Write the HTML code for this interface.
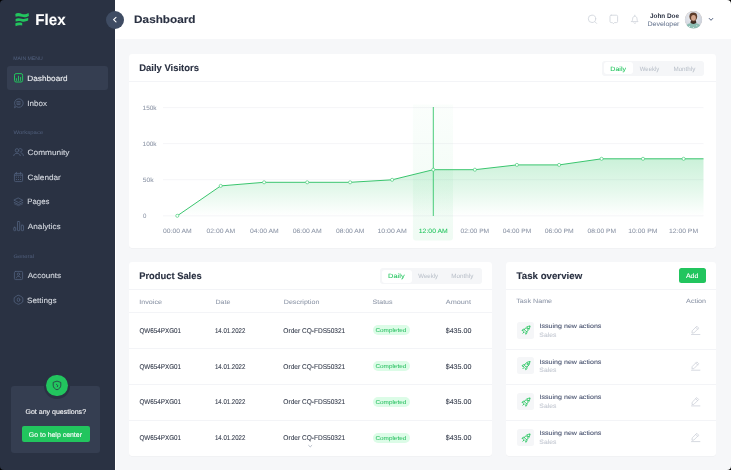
<!DOCTYPE html>
<html><head><meta charset="utf-8"><style>
html,body{margin:0;padding:0;background:#000;}
body{width:731px;height:470px;overflow:hidden;position:relative;}
#root{position:absolute;left:0;top:0;width:731px;height:470px;border-radius:4px;overflow:hidden;will-change:transform;}
.t{position:absolute;white-space:nowrap;transform-origin:0 0;font-family:"Liberation Sans",sans-serif;text-rendering:geometricPrecision;}
</style></head><body><div id="root">
<div style="position:absolute;left:0px;top:0px;width:115.00px;height:470.00px;background:#2a3243;border-radius:0px;"></div>
<div style="position:absolute;left:115px;top:0px;width:616.00px;height:39.00px;background:#ffffff;border-radius:0px;"></div>
<div style="position:absolute;left:115px;top:39px;width:1.00px;height:431.00px;background:#ffffff;border-radius:0px;"></div>
<div style="position:absolute;left:116px;top:39px;width:615.00px;height:431.00px;background:#f6f7f9;border-radius:0px;"></div>
<div style="position:absolute;left:7px;top:66px;width:101.00px;height:24.00px;background:#353e51;border-radius:3px;"></div>
<div style="position:absolute;left:11px;top:386px;width:89.00px;height:67.00px;background:#353e51;border-radius:3px;"></div>
<div style="position:absolute;left:43.6px;top:372.3px;width:26.6px;height:26.6px;border-radius:50%;background:#2a3243"></div>
<div style="position:absolute;left:46.2px;top:374.7px;width:21.4px;height:21.4px;border-radius:50%;background:#22c55e"></div>
<div style="position:absolute;left:21.8px;top:425.9px;width:68.00px;height:16.00px;background:#22c55e;border-radius:2px;"></div>
<div style="position:absolute;left:106px;top:10.6px;width:18px;height:18px;border-radius:50%;background:#3f4c63"></div>
<div style="position:absolute;left:684.8px;top:10.8px;width:17.6px;height:17.6px;border-radius:50%;background:#b9a89a"></div>
<div style="position:absolute;left:129px;top:53.5px;width:587.40px;height:194.20px;background:#ffffff;border-radius:3px;box-shadow:0 0.5px 0.5px rgba(30,40,60,0.05)"></div>
<div style="position:absolute;left:129px;top:81px;width:587.40px;height:1.00px;background:#f3f4f7;border-radius:0px;"></div>
<svg style="position:absolute;left:0;top:0" width="731" height="470" viewBox="0 0 731 470">
<defs>
<linearGradient id="gf" x1="0" y1="158" x2="0" y2="216" gradientUnits="userSpaceOnUse"><stop offset="0" stop-color="#22c55e" stop-opacity="0.24"/><stop offset="0.55" stop-color="#22c55e" stop-opacity="0.12"/><stop offset="1" stop-color="#22c55e" stop-opacity="0.0"/></linearGradient>
<linearGradient id="gb" x1="0" y1="104" x2="0" y2="240" gradientUnits="userSpaceOnUse"><stop offset="0" stop-color="#22c55e" stop-opacity="0.02"/><stop offset="1" stop-color="#22c55e" stop-opacity="0.07"/></linearGradient>
</defs>
<g stroke="#f1f2f5" stroke-width="0.8">
<line x1="163" y1="107.6" x2="703.5" y2="107.6"/><line x1="163" y1="143.6" x2="703.5" y2="143.6"/><line x1="163" y1="179.7" x2="703.5" y2="179.7"/><line x1="163" y1="215.8" x2="703.5" y2="215.8"/>
</g>
<path d="M412.9,104.5 H453 V237.4 Q453,240.4 450,240.4 H415.9 Q412.9,240.4 412.9,237.4 Z" fill="url(#gb)"/>
<path d="M177.3,215.8 L220.7,185.9 L264.1,182.3 L307.2,182.3 L350.1,182.3 L392.1,179.8 L433.3,169.7 L474.9,169.7 L516.9,164.9 L559.1,164.9 L601.6,158.8 L643,158.8 L683.6,158.8 L703.5,158.8 L703.5,215.8 L177.3,215.8 Z" fill="url(#gf)"/>
<line x1="433.3" y1="107" x2="433.3" y2="216" stroke="#35c66c" stroke-width="0.9"/>
<polyline points="177.3,215.8 220.7,185.9 264.1,182.3 307.2,182.3 350.1,182.3 392.1,179.8 433.3,169.7 474.9,169.7 516.9,164.9 559.1,164.9 601.6,158.8 643,158.8 683.6,158.8 703.5,158.8" fill="none" stroke="#3ac56e" stroke-width="1" stroke-linejoin="round"/>
<circle cx="177.3" cy="215.8" r="1.55" fill="#fff" stroke="#3ecb72" stroke-width="0.65"/><circle cx="220.7" cy="185.9" r="1.55" fill="#fff" stroke="#3ecb72" stroke-width="0.65"/><circle cx="264.1" cy="182.3" r="1.55" fill="#fff" stroke="#3ecb72" stroke-width="0.65"/><circle cx="307.2" cy="182.3" r="1.55" fill="#fff" stroke="#3ecb72" stroke-width="0.65"/><circle cx="350.1" cy="182.3" r="1.55" fill="#fff" stroke="#3ecb72" stroke-width="0.65"/><circle cx="392.1" cy="179.8" r="1.55" fill="#fff" stroke="#3ecb72" stroke-width="0.65"/><circle cx="433.3" cy="169.7" r="1.55" fill="#fff" stroke="#3ecb72" stroke-width="0.65"/><circle cx="474.9" cy="169.7" r="1.55" fill="#fff" stroke="#3ecb72" stroke-width="0.65"/><circle cx="516.9" cy="164.9" r="1.55" fill="#fff" stroke="#3ecb72" stroke-width="0.65"/><circle cx="559.1" cy="164.9" r="1.55" fill="#fff" stroke="#3ecb72" stroke-width="0.65"/><circle cx="601.6" cy="158.8" r="1.55" fill="#fff" stroke="#3ecb72" stroke-width="0.65"/><circle cx="643" cy="158.8" r="1.55" fill="#fff" stroke="#3ecb72" stroke-width="0.65"/><circle cx="683.6" cy="158.8" r="1.55" fill="#fff" stroke="#3ecb72" stroke-width="0.65"/>
</svg>
<div style="position:absolute;left:602px;top:61px;width:101.80px;height:14.50px;background:#f5f6f8;border-radius:3px;"></div>
<div style="position:absolute;left:603.8px;top:62.3px;width:29.00px;height:12.10px;background:#ffffff;border-radius:3px;"></div>
<div style="position:absolute;left:129.2px;top:261.9px;width:362.80px;height:194.10px;background:#ffffff;border-radius:3px;box-shadow:0 0.5px 0.5px rgba(30,40,60,0.05)"></div>
<div style="position:absolute;left:129.2px;top:289px;width:362.60px;height:1.00px;background:#f3f4f7;border-radius:0px;"></div>
<div style="position:absolute;left:380.1px;top:268.2px;width:102.30px;height:15.80px;background:#f5f6f8;border-radius:3px;"></div>
<div style="position:absolute;left:381.7px;top:269.5px;width:29.90px;height:13.00px;background:#ffffff;border-radius:3px;"></div>
<div style="position:absolute;left:129.2px;top:312px;width:362.60px;height:1.00px;background:#f3f4f7;border-radius:0px;"></div>
<div style="position:absolute;left:372.5px;top:325.4px;width:37.30px;height:9.90px;background:#dcfce7;border-radius:5px;"></div>
<div style="position:absolute;left:129.2px;top:348.3px;width:362.60px;height:1.00px;background:#f3f4f7;border-radius:0px;"></div>
<div style="position:absolute;left:372.5px;top:361.3px;width:37.30px;height:9.90px;background:#dcfce7;border-radius:5px;"></div>
<div style="position:absolute;left:129.2px;top:384.3px;width:362.60px;height:1.00px;background:#f3f4f7;border-radius:0px;"></div>
<div style="position:absolute;left:372.5px;top:396.7px;width:37.30px;height:9.90px;background:#dcfce7;border-radius:5px;"></div>
<div style="position:absolute;left:129.2px;top:420.3px;width:362.60px;height:1.00px;background:#f3f4f7;border-radius:0px;"></div>
<div style="position:absolute;left:372.5px;top:433.1px;width:37.30px;height:9.90px;background:#dcfce7;border-radius:5px;"></div>
<div style="position:absolute;left:506.2px;top:262.1px;width:210.00px;height:194.20px;background:#ffffff;border-radius:3px;box-shadow:0 0.5px 0.5px rgba(30,40,60,0.05)"></div>
<div style="position:absolute;left:506.3px;top:289px;width:209.90px;height:1.00px;background:#f3f4f7;border-radius:0px;"></div>
<div style="position:absolute;left:679px;top:267.9px;width:26.80px;height:15.50px;background:#22c55e;border-radius:2.5px;"></div>
<div style="position:absolute;left:517px;top:321.75px;width:17.40px;height:17.30px;background:#f5f6f8;border-radius:2.5px;"></div>
<div style="position:absolute;left:506.3px;top:348.5px;width:209.90px;height:1.00px;background:#f3f4f7;border-radius:0px;"></div>
<div style="position:absolute;left:517px;top:357.2px;width:17.40px;height:17.30px;background:#f5f6f8;border-radius:2.5px;"></div>
<div style="position:absolute;left:506.3px;top:384.2px;width:209.90px;height:1.00px;background:#f3f4f7;border-radius:0px;"></div>
<div style="position:absolute;left:517px;top:392.59999999999997px;width:17.40px;height:17.30px;background:#f5f6f8;border-radius:2.5px;"></div>
<div style="position:absolute;left:506.3px;top:419.9px;width:209.90px;height:1.00px;background:#f3f4f7;border-radius:0px;"></div>
<div style="position:absolute;left:517px;top:428.9px;width:17.40px;height:17.30px;background:#f5f6f8;border-radius:2.5px;"></div>
<svg style="position:absolute;left:0;top:0" width="731" height="470" viewBox="0 0 731 470">
<!-- logo -->
<g fill="#22c55e">
<path d="M15.3,13.9 C17,12.7 19.6,13 22,13.9 C24.4,14.8 26.6,13.7 28.6,12.9 L28.9,15.9 C26.8,16.9 24.4,17.6 22,16.8 C19.6,16 17.2,15.9 15.6,16.8 Z"/>
<path d="M15.6,18.9 C17.2,17.8 19.6,18 22,18.7 C24.2,19.4 26.2,18.6 28.2,17.8 L28.2,20.6 C26.2,21.5 24,22 21.8,21.4 C19.4,20.8 17.2,20.8 15.6,21.6 Z"/>
<path d="M15.3,23.4 C17,22.2 19.6,22.2 22.2,22.9 L22.2,25.6 C19.8,25.1 17.4,25.3 15.6,26.3 Z"/>
</g>
<!-- dashboard icon -->
<g fill="none" stroke="#22c55e" stroke-width="1">
<rect x="14.5" y="73.6" width="8.1" height="8.4" rx="1.6"/>
<path d="M16.4,78.2 V80.9 M18.5,75.8 V80.9 M20.6,77.0 V80.9" stroke-width="0.95"/>
</g>
<g fill="none" stroke="#4f5e7a" stroke-width="0.85" stroke-linecap="round" stroke-linejoin="round">
<!-- inbox -->
<path d="M14.6,107.4 L15.2,105.4 A4.3,4.3 0 1 1 16.6,106.8 Z"/>
<path d="M16.9,101.6 H20.1 M16.6,103.1 H20.4 M17.1,104.6 H19.9"/>
<!-- community -->
<circle cx="17.0" cy="150.4" r="1.75"/><path d="M13.7,155.6 C13.9,152.4 20.1,152.4 20.3,155.6"/>
<path d="M19.4,148.8 A1.75,1.75 0 1 1 20.2,152.0"/><path d="M21.2,152.9 C22.6,153.3 23.3,154.3 23.4,155.6"/>
<!-- calendar -->
<rect x="14.4" y="173.4" width="8.2" height="8.2" rx="1.2"/><path d="M14.4,175.2 H22.6 M16.4,172.3 V174.2 M20.6,172.3 V174.2"/>
<g stroke-width="1.0"><path d="M16.3,177.2 h0.2 M18.4,177.2 h0.2 M20.5,177.2 h0.2 M16.3,179.5 h0.2 M18.4,179.5 h0.2 M20.5,179.5 h0.2"/></g>
<!-- pages -->
<path d="M18.5,198.1 L22.8,200.3 L18.5,202.5 L14.2,200.3 Z"/><path d="M14.2,202.4 L18.5,204.6 L22.8,202.4"/><path d="M14.4,203.9 L18.5,205.7 L22.6,203.9" stroke-opacity="0.7"/>
<!-- analytics -->
<rect x="13.8" y="227.3" width="1.9" height="3.4" rx="0.5"/><rect x="17.5" y="221.5" width="2.2" height="9.2" rx="0.6"/><rect x="21.3" y="225.2" width="2.2" height="5.5" rx="0.6"/>
<!-- accounts -->
<rect x="14.4" y="271.4" width="8.2" height="8.2" rx="1.2"/><circle cx="18.5" cy="274.2" r="1.2"/><path d="M16.3,277.9 C16.6,275.6 20.4,275.6 20.7,277.9"/>
<!-- settings -->
<path d="M18.5,295.3 L20.6,296.2 L22.7,297.6 L22.9,299.8 L22.7,302.0 L20.6,303.4 L18.5,304.3 L16.4,303.4 L14.3,302.0 L14.1,299.8 L14.3,297.6 L16.4,296.2 Z"/>
<ellipse cx="18.5" cy="299.8" rx="1.3" ry="1.8"/>
</g>
<!-- shield -->
<g fill="none" stroke="#2b3344" stroke-width="0.8" stroke-linejoin="round">
<path d="M57,381.1 L60.8,382.4 V385.2 C60.8,387.6 59,389.1 57,389.8 C55,389.1 53.2,387.6 53.2,385.2 V382.4 Z"/>
<path d="M56.2,384.2 L57.8,385.6 L57.2,387"/>
</g>
<!-- collapse chevron -->
<path d="M116,17.4 L113.6,19.6 L116,21.8" fill="none" stroke="#ffffff" stroke-width="1.1" stroke-linecap="round" stroke-linejoin="round"/>
<!-- header icons -->
<g fill="none" stroke="#d3d7de" stroke-width="0.9" stroke-linecap="round" stroke-linejoin="round">
<circle cx="592" cy="18.8" r="3.7"/><path d="M594.8,21.6 L596.6,23.4"/>
<path d="M611.2,15.2 H616.4 A1.2,1.2 0 0 1 617.6,16.4 V21.4 A1.2,1.2 0 0 1 616.4,22.6 H614.4 L613.4,23.7 L612.4,22.6 H611.2 A1.2,1.2 0 0 1 610,21.4 V16.4 A1.2,1.2 0 0 1 611.2,15.2 Z"/>
<path d="M631.6,21.6 H638 C637.3,20.8 637,20.2 637,19 V18.8 C637,17.3 636,16.2 634.8,16.2 C633.6,16.2 632.6,17.3 632.6,18.8 V19 C632.6,20.2 632.3,20.8 631.6,21.6 Z"/>
<path d="M633.8,22.9 C634.3,23.5 635.3,23.5 635.8,22.9"/><path d="M634.8,15.2 V16.1"/>
</g>
<path d="M709.2,18.4 L711,20.3 L712.8,18.4" fill="none" stroke="#4a5a78" stroke-width="0.95" stroke-linecap="round" stroke-linejoin="round"/>
<!-- avatar -->
<defs><clipPath id="av"><circle cx="693.5" cy="19.75" r="8.8"/></clipPath>
<radialGradient id="avbg" cx="0.4" cy="0.35" r="0.7"><stop offset="0" stop-color="#eceef2"/><stop offset="1" stop-color="#c9ced8"/></radialGradient></defs>
<g clip-path="url(#av)">
<circle cx="693.5" cy="19.75" r="8.8" fill="url(#avbg)"/>
<path d="M684,30 C684.8,25 688,23 693.2,23 C698.4,23 701.8,25 703,30 Z" fill="#8cbdb2"/>
<circle cx="689.5" cy="26.5" r="0.6" fill="#e8f2ee"/><circle cx="696.8" cy="25.8" r="0.5" fill="#e8f2ee"/><circle cx="693.4" cy="27.6" r="0.5" fill="#e8f2ee"/>
<path d="M690.4,22.6 C691.4,24.4 695.4,24.4 696.4,22.6 L695.8,20.6 H691 Z" fill="#3b2b22"/>
<ellipse cx="693.3" cy="16.6" rx="3.9" ry="4.2" fill="#5e3d2a"/>
<ellipse cx="693.5" cy="17.9" rx="2.4" ry="2.9" fill="#d3a58c"/>
<path d="M691.2,19.6 C691.8,21.4 695.2,21.4 695.8,19.6 C695.6,21.8 694.6,22.6 693.5,22.6 C692.4,22.6 691.4,21.8 691.2,19.6 Z" fill="#4a3326"/>
</g>
<g transform="translate(521.6,325.9)" fill="none" stroke="#2fc766" stroke-width="0.95" stroke-linejoin="round" stroke-linecap="round">
<path d="M8.2,0.3 C6,0.1 3.8,1.6 2.8,3.8 L4.8,5.8 C7,4.8 8.4,2.6 8.2,0.3 Z"/>
<path d="M2.9,3.4 C1.8,3.0 0.8,3.5 0.4,4.6 C1.0,4.7 1.7,4.9 2.2,5.3"/>
<path d="M5.2,5.5 C5.7,6.6 5.3,7.8 4.2,8.4 C4.1,7.8 3.9,7.1 3.5,6.6"/>
<circle cx="6.0" cy="2.6" r="0.7"/><path d="M2.3,6.2 L1.3,7.3"/>
</g><g transform="translate(691.3,325.8)" fill="none" stroke="#c9ced7" stroke-width="0.75" stroke-linejoin="round" stroke-linecap="round">
<path d="M0.7,6.9 L0.9,5.0 L5.5,0.4 L7.4,2.3 L2.8,6.9 Z"/><path d="M4.4,1.5 L6.3,3.4"/><path d="M0.2,8.7 H8.6"/>
</g><g transform="translate(521.6,361.4)" fill="none" stroke="#2fc766" stroke-width="0.95" stroke-linejoin="round" stroke-linecap="round">
<path d="M8.2,0.3 C6,0.1 3.8,1.6 2.8,3.8 L4.8,5.8 C7,4.8 8.4,2.6 8.2,0.3 Z"/>
<path d="M2.9,3.4 C1.8,3.0 0.8,3.5 0.4,4.6 C1.0,4.7 1.7,4.9 2.2,5.3"/>
<path d="M5.2,5.5 C5.7,6.6 5.3,7.8 4.2,8.4 C4.1,7.8 3.9,7.1 3.5,6.6"/>
<circle cx="6.0" cy="2.6" r="0.7"/><path d="M2.3,6.2 L1.3,7.3"/>
</g><g transform="translate(691.3,361.5)" fill="none" stroke="#c9ced7" stroke-width="0.75" stroke-linejoin="round" stroke-linecap="round">
<path d="M0.7,6.9 L0.9,5.0 L5.5,0.4 L7.4,2.3 L2.8,6.9 Z"/><path d="M4.4,1.5 L6.3,3.4"/><path d="M0.2,8.7 H8.6"/>
</g><g transform="translate(521.6,397.9)" fill="none" stroke="#2fc766" stroke-width="0.95" stroke-linejoin="round" stroke-linecap="round">
<path d="M8.2,0.3 C6,0.1 3.8,1.6 2.8,3.8 L4.8,5.8 C7,4.8 8.4,2.6 8.2,0.3 Z"/>
<path d="M2.9,3.4 C1.8,3.0 0.8,3.5 0.4,4.6 C1.0,4.7 1.7,4.9 2.2,5.3"/>
<path d="M5.2,5.5 C5.7,6.6 5.3,7.8 4.2,8.4 C4.1,7.8 3.9,7.1 3.5,6.6"/>
<circle cx="6.0" cy="2.6" r="0.7"/><path d="M2.3,6.2 L1.3,7.3"/>
</g><g transform="translate(691.3,397.20000000000005)" fill="none" stroke="#c9ced7" stroke-width="0.75" stroke-linejoin="round" stroke-linecap="round">
<path d="M0.7,6.9 L0.9,5.0 L5.5,0.4 L7.4,2.3 L2.8,6.9 Z"/><path d="M4.4,1.5 L6.3,3.4"/><path d="M0.2,8.7 H8.6"/>
</g><g transform="translate(521.6,433.9)" fill="none" stroke="#2fc766" stroke-width="0.95" stroke-linejoin="round" stroke-linecap="round">
<path d="M8.2,0.3 C6,0.1 3.8,1.6 2.8,3.8 L4.8,5.8 C7,4.8 8.4,2.6 8.2,0.3 Z"/>
<path d="M2.9,3.4 C1.8,3.0 0.8,3.5 0.4,4.6 C1.0,4.7 1.7,4.9 2.2,5.3"/>
<path d="M5.2,5.5 C5.7,6.6 5.3,7.8 4.2,8.4 C4.1,7.8 3.9,7.1 3.5,6.6"/>
<circle cx="6.0" cy="2.6" r="0.7"/><path d="M2.3,6.2 L1.3,7.3"/>
</g><g transform="translate(691.3,432.90000000000003)" fill="none" stroke="#c9ced7" stroke-width="0.75" stroke-linejoin="round" stroke-linecap="round">
<path d="M0.7,6.9 L0.9,5.0 L5.5,0.4 L7.4,2.3 L2.8,6.9 Z"/><path d="M4.4,1.5 L6.3,3.4"/><path d="M0.2,8.7 H8.6"/>
</g>
<path d="M308.6,445.4 L310.2,446.9 L311.8,445.4" fill="none" stroke="#9aa3b3" stroke-width="0.7" stroke-linecap="round" stroke-linejoin="round"/>
</svg>
<svg id="txt" style="position:absolute;left:0;top:0" width="731" height="470" viewBox="0 0 731 470" font-family="Liberation Sans" text-rendering="geometricPrecision"><text x="35.34" y="24.70" font-size="15.55" textLength="30.22" lengthAdjust="spacingAndGlyphs" fill="#ffffff" stroke="#ffffff" stroke-width="0.12" font-weight="700">Flex</text><text x="13.20" y="59.90" font-size="5.09" textLength="29.61" lengthAdjust="spacingAndGlyphs" fill="#51607e">MAIN MENU</text><text x="27.38" y="80.90" font-size="7.70" textLength="40.17" lengthAdjust="spacingAndGlyphs" fill="#eef0f3" stroke="#eef0f3" stroke-width="0.1">Dashboard</text><text x="27.33" y="105.65" font-size="7.70" textLength="19.58" lengthAdjust="spacingAndGlyphs" fill="#d5d9e0" stroke="#d5d9e0" stroke-width="0.1">Inbox</text><text x="27.59" y="155.15" font-size="7.70" textLength="41.93" lengthAdjust="spacingAndGlyphs" fill="#d5d9e0" stroke="#d5d9e0" stroke-width="0.1">Community</text><text x="27.47" y="179.65" font-size="7.70" textLength="33.39" lengthAdjust="spacingAndGlyphs" fill="#d5d9e0" stroke="#d5d9e0" stroke-width="0.1">Calendar</text><text x="27.32" y="204.25" font-size="7.70" textLength="22.17" lengthAdjust="spacingAndGlyphs" fill="#d5d9e0" stroke="#d5d9e0" stroke-width="0.1">Pages</text><text x="27.86" y="229.05" font-size="7.70" textLength="32.77" lengthAdjust="spacingAndGlyphs" fill="#d5d9e0" stroke="#d5d9e0" stroke-width="0.1">Analytics</text><text x="27.69" y="277.95" font-size="7.70" textLength="33.29" lengthAdjust="spacingAndGlyphs" fill="#d5d9e0" stroke="#d5d9e0" stroke-width="0.1">Accounts</text><text x="27.14" y="302.55" font-size="7.70" textLength="29.42" lengthAdjust="spacingAndGlyphs" fill="#d5d9e0" stroke="#d5d9e0" stroke-width="0.1">Settings</text><text x="13.47" y="134.15" font-size="5.09" textLength="29.73" lengthAdjust="spacingAndGlyphs" fill="#51607e">Workspace</text><text x="13.49" y="258.05" font-size="5.09" textLength="20.44" lengthAdjust="spacingAndGlyphs" fill="#51607e">General</text><text x="25.50" y="413.80" font-size="6.83" textLength="60.55" lengthAdjust="spacingAndGlyphs" fill="#f3f4f6" stroke="#f3f4f6" stroke-width="0.1">Got any questions?</text><text x="28.81" y="436.70" font-size="6.83" textLength="53.15" lengthAdjust="spacingAndGlyphs" fill="#ffffff" stroke="#ffffff" stroke-width="0.1">Go to help center</text><text x="134.11" y="23.03" font-size="10.83" textLength="61.44" lengthAdjust="spacingAndGlyphs" fill="#2a3142" stroke="#2a3142" stroke-width="0.12" font-weight="700">Dashboard</text><text x="650.05" y="17.70" font-size="6.69" textLength="29.00" lengthAdjust="spacingAndGlyphs" fill="#2a3142" font-weight="700">John Doe</text><text x="647.41" y="25.95" font-size="6.54" textLength="32.06" lengthAdjust="spacingAndGlyphs" fill="#6f7d96" stroke="#6f7d96" stroke-width="0.05">Developer</text><text x="139.22" y="70.55" font-size="9.59" textLength="59.71" lengthAdjust="spacingAndGlyphs" fill="#2a3142" stroke="#2a3142" stroke-width="0.12" font-weight="700">Daily Visitors</text><text x="610.33" y="70.65" font-size="6.25" textLength="15.71" lengthAdjust="spacingAndGlyphs" fill="#22c55e" stroke="#22c55e" stroke-width="0.05">Daily</text><text x="639.87" y="70.65" font-size="6.25" textLength="19.31" lengthAdjust="spacingAndGlyphs" fill="#bac0ca" stroke="#bac0ca" stroke-width="0.03">Weekly</text><text x="673.43" y="70.65" font-size="6.25" textLength="21.91" lengthAdjust="spacingAndGlyphs" fill="#bac0ca" stroke="#bac0ca" stroke-width="0.03">Monthly</text><text x="142.60" y="109.75" font-size="6.25" textLength="14.02" lengthAdjust="spacingAndGlyphs" fill="#8c95a6" stroke="#8c95a6" stroke-width="0.06">150k</text><text x="142.60" y="145.75" font-size="6.25" textLength="14.02" lengthAdjust="spacingAndGlyphs" fill="#8c95a6" stroke="#8c95a6" stroke-width="0.06">100k</text><text x="142.85" y="181.85" font-size="6.25" textLength="10.77" lengthAdjust="spacingAndGlyphs" fill="#8c95a6" stroke="#8c95a6" stroke-width="0.06">50k</text><text x="143.04" y="217.95" font-size="6.25" textLength="3.38" lengthAdjust="spacingAndGlyphs" fill="#8c95a6" stroke="#8c95a6" stroke-width="0.06">0</text><text x="163.08" y="232.50" font-size="6.25" textLength="28.72" lengthAdjust="spacingAndGlyphs" fill="#8c95a6" stroke="#8c95a6" stroke-width="0.06">00:00 AM</text><text x="206.53" y="232.50" font-size="6.25" textLength="28.53" lengthAdjust="spacingAndGlyphs" fill="#8c95a6" stroke="#8c95a6" stroke-width="0.06">02:00 AM</text><text x="249.98" y="232.50" font-size="6.25" textLength="28.66" lengthAdjust="spacingAndGlyphs" fill="#8c95a6" stroke="#8c95a6" stroke-width="0.06">04:00 AM</text><text x="292.68" y="232.50" font-size="6.25" textLength="29.01" lengthAdjust="spacingAndGlyphs" fill="#8c95a6" stroke="#8c95a6" stroke-width="0.06">06:00 AM</text><text x="336.02" y="232.50" font-size="6.25" textLength="28.47" lengthAdjust="spacingAndGlyphs" fill="#8c95a6" stroke="#8c95a6" stroke-width="0.06">08:00 AM</text><text x="377.43" y="232.50" font-size="6.25" textLength="29.37" lengthAdjust="spacingAndGlyphs" fill="#8c95a6" stroke="#8c95a6" stroke-width="0.06">10:00 AM</text><text x="418.82" y="232.50" font-size="6.25" textLength="28.94" lengthAdjust="spacingAndGlyphs" fill="#22c55e" stroke="#22c55e" stroke-width="0.06">12:00 AM</text><text x="460.62" y="232.50" font-size="6.25" textLength="28.59" lengthAdjust="spacingAndGlyphs" fill="#8c95a6" stroke="#8c95a6" stroke-width="0.06">02:00 PM</text><text x="502.89" y="232.50" font-size="6.25" textLength="28.34" lengthAdjust="spacingAndGlyphs" fill="#8c95a6" stroke="#8c95a6" stroke-width="0.06">04:00 PM</text><text x="544.76" y="232.50" font-size="6.25" textLength="28.99" lengthAdjust="spacingAndGlyphs" fill="#8c95a6" stroke="#8c95a6" stroke-width="0.06">06:00 PM</text><text x="587.52" y="232.50" font-size="6.25" textLength="28.45" lengthAdjust="spacingAndGlyphs" fill="#8c95a6" stroke="#8c95a6" stroke-width="0.06">08:00 PM</text><text x="628.19" y="232.50" font-size="6.25" textLength="29.30" lengthAdjust="spacingAndGlyphs" fill="#8c95a6" stroke="#8c95a6" stroke-width="0.06">10:00 PM</text><text x="668.95" y="232.50" font-size="6.25" textLength="29.15" lengthAdjust="spacingAndGlyphs" fill="#8c95a6" stroke="#8c95a6" stroke-width="0.06">12:00 PM</text><text x="139.16" y="279.10" font-size="9.59" textLength="62.49" lengthAdjust="spacingAndGlyphs" fill="#2a3142" stroke="#2a3142" stroke-width="0.12" font-weight="700">Product Sales</text><text x="388.10" y="278.25" font-size="6.25" textLength="16.55" lengthAdjust="spacingAndGlyphs" fill="#22c55e" stroke="#22c55e" stroke-width="0.05">Daily</text><text x="418.36" y="278.25" font-size="6.25" textLength="19.68" lengthAdjust="spacingAndGlyphs" fill="#bac0ca" stroke="#bac0ca" stroke-width="0.03">Weekly</text><text x="451.35" y="278.25" font-size="6.25" textLength="22.08" lengthAdjust="spacingAndGlyphs" fill="#bac0ca" stroke="#bac0ca" stroke-width="0.03">Monthly</text><text x="139.23" y="303.55" font-size="6.25" textLength="22.89" lengthAdjust="spacingAndGlyphs" fill="#9099aa" stroke="#9099aa" stroke-width="0.06">Invoice</text><text x="215.51" y="303.55" font-size="6.25" textLength="14.85" lengthAdjust="spacingAndGlyphs" fill="#9099aa" stroke="#9099aa" stroke-width="0.06">Date</text><text x="283.74" y="303.55" font-size="6.25" textLength="35.62" lengthAdjust="spacingAndGlyphs" fill="#9099aa" stroke="#9099aa" stroke-width="0.06">Description</text><text x="372.60" y="303.55" font-size="6.25" textLength="19.90" lengthAdjust="spacingAndGlyphs" fill="#9099aa" stroke="#9099aa" stroke-width="0.06">Status</text><text x="445.84" y="303.55" font-size="6.25" textLength="25.08" lengthAdjust="spacingAndGlyphs" fill="#9099aa" stroke="#9099aa" stroke-width="0.06">Amount</text><text x="139.41" y="332.80" font-size="6.98" textLength="41.68" lengthAdjust="spacingAndGlyphs" fill="#363d4d" stroke="#363d4d" stroke-width="0.1">QW654PXG01</text><text x="214.93" y="332.80" font-size="6.98" textLength="30.46" lengthAdjust="spacingAndGlyphs" fill="#363d4d" stroke="#363d4d" stroke-width="0.1">14.01.2022</text><text x="283.37" y="332.80" font-size="6.98" textLength="61.86" lengthAdjust="spacingAndGlyphs" fill="#363d4d" stroke="#363d4d" stroke-width="0.1">Order CQ-FDS50321</text><text x="375.50" y="332.35" font-size="5.67" textLength="30.71" lengthAdjust="spacingAndGlyphs" fill="#2cc063" stroke="#2cc063" stroke-width="0.04">Completed</text><text x="445.74" y="332.80" font-size="6.98" textLength="25.64" lengthAdjust="spacingAndGlyphs" fill="#363d4d" stroke="#363d4d" stroke-width="0.1">$435.00</text><text x="139.41" y="368.70" font-size="6.98" textLength="41.68" lengthAdjust="spacingAndGlyphs" fill="#363d4d" stroke="#363d4d" stroke-width="0.1">QW654PXG01</text><text x="214.93" y="368.70" font-size="6.98" textLength="30.46" lengthAdjust="spacingAndGlyphs" fill="#363d4d" stroke="#363d4d" stroke-width="0.1">14.01.2022</text><text x="283.37" y="368.70" font-size="6.98" textLength="61.86" lengthAdjust="spacingAndGlyphs" fill="#363d4d" stroke="#363d4d" stroke-width="0.1">Order CQ-FDS50321</text><text x="375.50" y="368.25" font-size="5.67" textLength="30.71" lengthAdjust="spacingAndGlyphs" fill="#2cc063" stroke="#2cc063" stroke-width="0.04">Completed</text><text x="445.74" y="368.70" font-size="6.98" textLength="25.64" lengthAdjust="spacingAndGlyphs" fill="#363d4d" stroke="#363d4d" stroke-width="0.1">$435.00</text><text x="139.41" y="404.10" font-size="6.98" textLength="41.68" lengthAdjust="spacingAndGlyphs" fill="#363d4d" stroke="#363d4d" stroke-width="0.1">QW654PXG01</text><text x="214.93" y="404.10" font-size="6.98" textLength="30.46" lengthAdjust="spacingAndGlyphs" fill="#363d4d" stroke="#363d4d" stroke-width="0.1">14.01.2022</text><text x="283.37" y="404.10" font-size="6.98" textLength="61.86" lengthAdjust="spacingAndGlyphs" fill="#363d4d" stroke="#363d4d" stroke-width="0.1">Order CQ-FDS50321</text><text x="375.50" y="403.65" font-size="5.67" textLength="30.71" lengthAdjust="spacingAndGlyphs" fill="#2cc063" stroke="#2cc063" stroke-width="0.04">Completed</text><text x="445.74" y="404.10" font-size="6.98" textLength="25.64" lengthAdjust="spacingAndGlyphs" fill="#363d4d" stroke="#363d4d" stroke-width="0.1">$435.00</text><text x="139.41" y="439.50" font-size="6.98" textLength="41.68" lengthAdjust="spacingAndGlyphs" fill="#363d4d" stroke="#363d4d" stroke-width="0.1">QW654PXG01</text><text x="214.93" y="439.50" font-size="6.98" textLength="30.46" lengthAdjust="spacingAndGlyphs" fill="#363d4d" stroke="#363d4d" stroke-width="0.1">14.01.2022</text><text x="283.37" y="439.50" font-size="6.98" textLength="61.86" lengthAdjust="spacingAndGlyphs" fill="#363d4d" stroke="#363d4d" stroke-width="0.1">Order CQ-FDS50321</text><text x="375.50" y="440.05" font-size="5.67" textLength="30.71" lengthAdjust="spacingAndGlyphs" fill="#2cc063" stroke="#2cc063" stroke-width="0.04">Completed</text><text x="445.74" y="439.50" font-size="6.98" textLength="25.64" lengthAdjust="spacingAndGlyphs" fill="#363d4d" stroke="#363d4d" stroke-width="0.1">$435.00</text><text x="516.56" y="278.95" font-size="9.59" textLength="65.63" lengthAdjust="spacingAndGlyphs" fill="#2a3142" stroke="#2a3142" stroke-width="0.12" font-weight="700">Task overview</text><text x="685.93" y="277.80" font-size="6.40" textLength="12.50" lengthAdjust="spacingAndGlyphs" fill="#ffffff" stroke="#ffffff" stroke-width="0.1">Add</text><text x="516.29" y="303.35" font-size="6.25" textLength="35.83" lengthAdjust="spacingAndGlyphs" fill="#9099aa" stroke="#9099aa" stroke-width="0.06">Task Name</text><text x="686.14" y="303.35" font-size="6.25" textLength="20.01" lengthAdjust="spacingAndGlyphs" fill="#9099aa" stroke="#9099aa" stroke-width="0.06">Action</text><text x="539.53" y="328.20" font-size="6.25" textLength="61.86" lengthAdjust="spacingAndGlyphs" fill="#4d5773" stroke="#4d5773" stroke-width="0.1">Issuing new actions</text><text x="539.38" y="336.70" font-size="6.25" textLength="16.91" lengthAdjust="spacingAndGlyphs" fill="#c5cad3" stroke="#c5cad3" stroke-width="0.1">Sales</text><text x="539.53" y="363.65" font-size="6.25" textLength="61.86" lengthAdjust="spacingAndGlyphs" fill="#4d5773" stroke="#4d5773" stroke-width="0.1">Issuing new actions</text><text x="539.38" y="372.45" font-size="6.25" textLength="16.91" lengthAdjust="spacingAndGlyphs" fill="#c5cad3" stroke="#c5cad3" stroke-width="0.1">Sales</text><text x="539.53" y="399.05" font-size="6.25" textLength="61.86" lengthAdjust="spacingAndGlyphs" fill="#4d5773" stroke="#4d5773" stroke-width="0.1">Issuing new actions</text><text x="539.38" y="407.55" font-size="6.25" textLength="16.91" lengthAdjust="spacingAndGlyphs" fill="#c5cad3" stroke="#c5cad3" stroke-width="0.1">Sales</text><text x="539.53" y="435.35" font-size="6.25" textLength="61.86" lengthAdjust="spacingAndGlyphs" fill="#4d5773" stroke="#4d5773" stroke-width="0.1">Issuing new actions</text><text x="539.38" y="444.25" font-size="6.25" textLength="16.91" lengthAdjust="spacingAndGlyphs" fill="#c5cad3" stroke="#c5cad3" stroke-width="0.1">Sales</text></svg>
</div></body></html>
